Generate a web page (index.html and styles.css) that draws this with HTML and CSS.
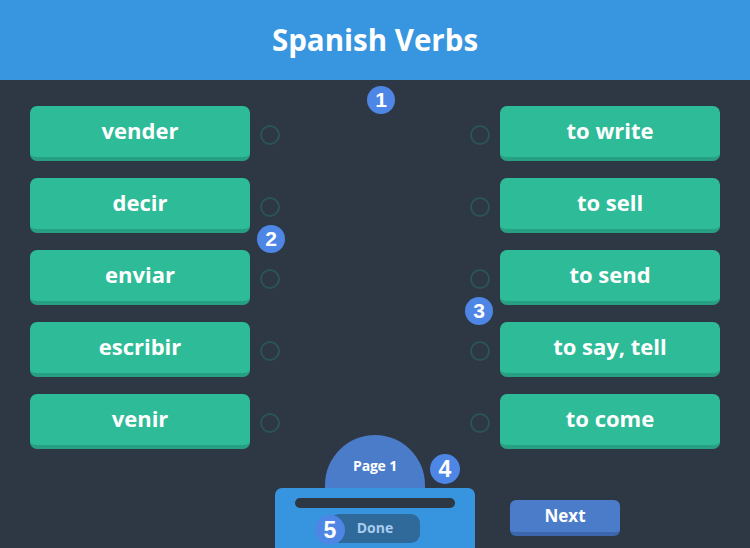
FILE: index.html
```html
<!DOCTYPE html>
<html lang="en">
<head>
<meta charset="utf-8">
<title>Spanish Verbs</title>
<link rel="stylesheet" href="styles.css">
</head>
<body>
<div class="app">
  <header class="topbar"><h1 class="title">Spanish Verbs</h1></header>

  <main class="board">
    <div class="column column-left">
      <div class="row"><div class="card">vender</div><span class="dot"></span></div>
      <div class="row"><div class="card">decir</div><span class="dot"></span></div>
      <div class="row"><div class="card">enviar</div><span class="dot"></span></div>
      <div class="row"><div class="card">escribir</div><span class="dot"></span></div>
      <div class="row"><div class="card">venir</div><span class="dot"></span></div>
    </div>
    <div class="column column-right">
      <div class="row"><span class="dot"></span><div class="card">to write</div></div>
      <div class="row"><span class="dot"></span><div class="card">to sell</div></div>
      <div class="row"><span class="dot"></span><div class="card">to send</div></div>
      <div class="row"><span class="dot"></span><div class="card">to say, tell</div></div>
      <div class="row"><span class="dot"></span><div class="card">to come</div></div>
    </div>
  </main>

  <footer class="footer">
    <div class="footer-side"></div>
    <div class="pager">
      <div class="page-tab">Page 1</div>
      <div class="panel">
        <div class="progress"></div>
        <button class="done">Done</button>
      </div>
    </div>
    <div class="footer-side footer-right">
      <button class="next">Next</button>
    </div>
  </footer>

  <span class="badge badge-1">1</span>
  <span class="badge badge-2">2</span>
  <span class="badge badge-3">3</span>
  <span class="badge badge-4">4</span>
  <span class="badge badge-5">5</span>
</div>
</body>
</html>
```

FILE: styles.css
```css
* { box-sizing: border-box; }

html, body {
  margin: 0;
  padding: 0;
}

body {
  background: #2e3744;
  font-family: "Open Sans", "Noto Sans", sans-serif;
  color: #fff;
}

.app {
  position: relative;
  width: 750px;
  height: 548px;
  overflow: hidden;
  display: flex;
  flex-direction: column;
}

.topbar {
  height: 80px;
  flex: none;
  background: #3796df;
  display: flex;
  align-items: center;
  justify-content: center;
}

.title {
  margin: 0;
  font-size: 29.5px;
  font-weight: 700;
  line-height: 1;
  padding-bottom: 1px;
}

.board {
  display: flex;
  justify-content: space-between;
  padding: 26px 30px 0;
}

.column {
  display: flex;
  flex-direction: column;
  gap: 17px;
}

.row {
  display: flex;
  align-items: center;
  gap: 10px;
  height: 55px;
}

.card {
  width: 220px;
  height: 55px;
  background: #2ebb97;
  border-bottom: 4px solid #27a082;
  border-radius: 7px;
  display: flex;
  align-items: center;
  justify-content: center;
  font-size: 22px;
  font-weight: 700;
  padding-bottom: 4px;
}

.dot {
  width: 20px;
  height: 20px;
  border-radius: 50%;
  border: 2px solid #2a5556;
  margin-top: 3px;
}

.footer {
  margin-top: -14px;
  height: 113px;
  display: grid;
  grid-template-columns: 1fr 200px 1fr;
}

.pager {
  display: flex;
  flex-direction: column;
  align-items: center;
}

.page-tab {
  width: 100px;
  height: 53px;
  background: #4a7cc9;
  border-radius: 50px 50px 0 0;
  font-size: 14px;
  font-weight: 700;
  text-align: center;
  padding-top: 21px;
  letter-spacing: -0.2px;
}

.panel {
  width: 200px;
  height: 60px;
  background: #3795df;
  border-radius: 7px 7px 0 0;
  display: flex;
  flex-direction: column;
  align-items: center;
  padding-top: 10px;
}

.progress {
  width: 160px;
  height: 10px;
  border-radius: 5px;
  background: #2e3744;
}

.done {
  margin-top: 6px;
  width: 90px;
  height: 29px;
  border: none;
  border-radius: 9px;
  background: #2f6a9b;
  color: #a9cdef;
  font-family: inherit;
  font-size: 14px;
  font-weight: 700;
  padding: 0 0 2px;
}

.footer-right {
  padding: 65px 0 0 35px;
}

.next {
  width: 110px;
  height: 36px;
  border: none;
  border-bottom: 4px solid #3c67ad;
  border-radius: 6px;
  background: #4a7cc9;
  color: #fff;
  font-family: inherit;
  font-size: 17px;
  font-weight: 700;
  padding: 0 0 2px;
}

.badge {
  position: absolute;
  width: 28px;
  height: 28px;
  border-radius: 50%;
  background: #4e86e6;
  color: #fff;
  font-family: "Liberation Sans", Arial, sans-serif;
  font-weight: 700;
  font-size: 21px;
  line-height: 28px;
  text-align: center;
}

.badge-1 { left: 367px; top: 86px; }
.badge-2 { left: 257px; top: 225px; }
.badge-3 { left: 465px; top: 297px; }
.badge-4 { left: 430px; top: 454px; width: 30px; height: 30px; line-height: 30px; font-size: 23px; }
.badge-5 { left: 315px; top: 515px; width: 30px; height: 30px; line-height: 30px; font-size: 23px; }
```
